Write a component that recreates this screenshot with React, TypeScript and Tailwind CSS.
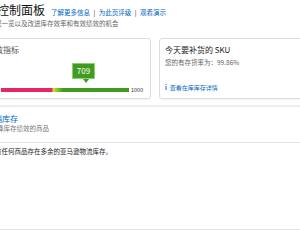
export default function App() {
  return (
    <div className="w-[300px] h-[240px] overflow-hidden bg-white font-['Noto_Sans_CJK_SC','Noto_Sans',sans-serif] text-[#333]">
      {/* header */}
      <div className="flex items-baseline pt-[2px] h-[19px] whitespace-nowrap">
        <span className="-ml-[3px] text-[12px] leading-[16px] text-[#111]">控制面板</span>
        <span className="ml-[6px] text-[6.5px] text-[#0066c0]">
          了解更多信息 <span className="text-[#333] mx-[2px]">|</span> 为此页评级 <span className="text-[#333] mx-[2px]">|</span> 观看演示
        </span>
      </div>
      <div className="-ml-[5px] text-[6.5px] leading-[9px] text-[#666] whitespace-nowrap">
        况一览以及改进库存效率和有效绩效的机会
      </div>

      {/* cards */}
      <div className="flex gap-[8px] mt-[10px] h-[61px]">
        <div className="-ml-[10px] w-[161px] shrink-0 rounded-[3px] border border-[#ddd] pl-[10px] pt-[6px] shadow-[0_1px_1px_rgba(0,0,0,0.05)]">
          <div className="-ml-[6px] text-[8px] leading-[10px] text-[#555] whitespace-nowrap">效指标</div>
          <div className="relative mt-[32px] flex items-center">
            <div className="w-[128px] h-[3.5px] bg-[linear-gradient(to_right,#e8256b_0px,#e8256b_51px,#c5e61c_52px,#3f9c1f_62px,#3f9c1f_100%)]" />
            <span className="ml-[2px] text-[5.5px] leading-[6px] text-[#333]">1000</span>
            <div className="absolute left-[71px] -top-[24px] w-[23px] h-[16px] flex items-center justify-center bg-[#3f9c1f] border border-[#8fce6e] text-white text-[8px] leading-none">
              709
              <span className="absolute left-[10px] -bottom-[5px] w-0 h-0 border-l-[3px] border-r-[3px] border-t-[4px] border-l-transparent border-r-transparent border-t-[#3f9c1f]" />
            </div>
          </div>
        </div>
        <div className="w-[160px] shrink-0 rounded-[3px] border border-[#ddd] pl-[5px] pt-[6px] shadow-[0_1px_1px_rgba(0,0,0,0.05)] whitespace-nowrap">
          <div className="text-[8px] leading-[10px] text-[#222]">今天要补货的 SKU</div>
          <div className="mt-[3px] text-[6.5px] leading-[8px] text-[#666]">您的有存货率为：99.86%</div>
          <div className="mt-[18px] flex items-center gap-[3px] text-[6px] leading-[8px] text-[#0066c0]">
            <span className="text-[6px] font-bold">i</span>
            <span>查看在库库存详情</span>
          </div>
        </div>
      </div>

      {/* excess inventory */}
      <div className="mt-[6px] border-t-2 border-[#eee] pt-[6px] pb-[9px] whitespace-nowrap">
        <div className="-ml-[6px] text-[8px] leading-[11px] text-[#0066c0]">销库存</div>
        <div className="-ml-[3px] text-[6.5px] leading-[9px] text-[#777]">降库存绩效的商品</div>
      </div>
      <div className="border-t border-[#e3e3e3] pt-[4px] h-[88px] border-b whitespace-nowrap">
        <div className="-ml-[5px] text-[6.5px] leading-[9px] text-[#222]">有任何商品存在多余的亚马逊物流库存。</div>
      </div>
    </div>
  );
}
